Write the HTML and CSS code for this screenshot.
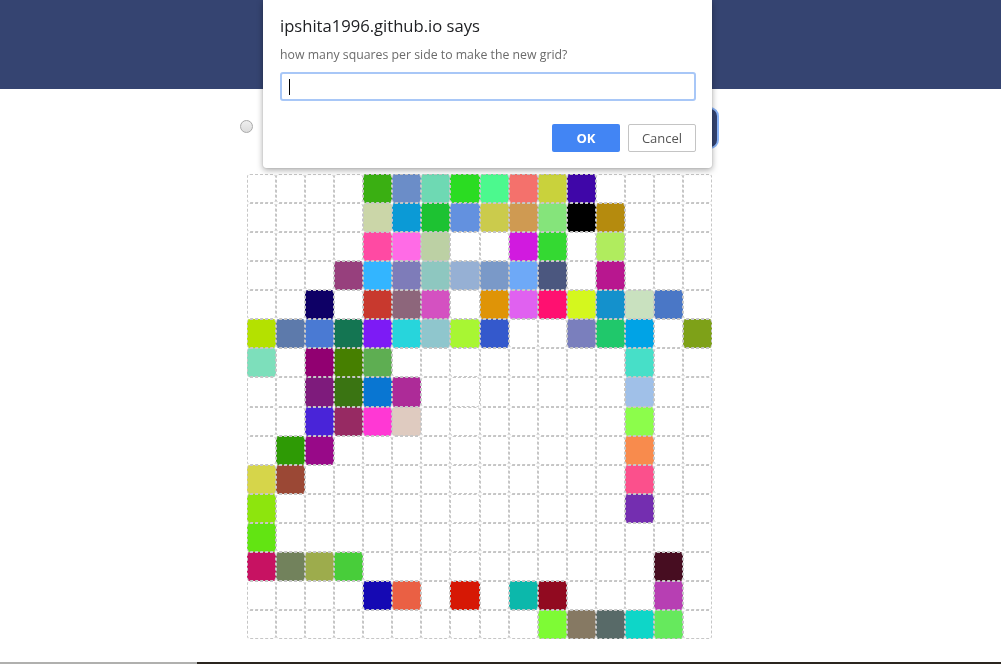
FILE: index.html
```html
<!DOCTYPE html>
<html>
<head>
<meta charset="utf-8">
<link rel="stylesheet" href="styles.css">
</head>
<body>
<header class="topbar"></header>
<main class="main">
  <div class="toolbar">
    <span class="radio"></span>
    <button class="btn" aria-label="Clear grid"></button>
  </div>
  <div class="grid">
<div class="c"></div><div class="c"></div><div class="c"></div><div class="c"></div><div class="c" style="background:#3aaf12"></div><div class="c" style="background:#6b8dc8"></div><div class="c" style="background:#6ed9b3"></div><div class="c" style="background:#2bdc22"></div><div class="c" style="background:#4cf98e"></div><div class="c" style="background:#f4716c"></div><div class="c" style="background:#c9d23c"></div><div class="c" style="background:#3f06a8"></div><div class="c"></div><div class="c"></div><div class="c"></div><div class="c"></div>
<div class="c"></div><div class="c"></div><div class="c"></div><div class="c"></div><div class="c" style="background:#cbd6a8"></div><div class="c" style="background:#0b9ad6"></div><div class="c" style="background:#1dc232"></div><div class="c" style="background:#6391df"></div><div class="c" style="background:#cbcb4c"></div><div class="c" style="background:#cf9a52"></div><div class="c" style="background:#85e47b"></div><div class="c" style="background:#000000"></div><div class="c" style="background:#b58b0e"></div><div class="c"></div><div class="c"></div><div class="c"></div>
<div class="c"></div><div class="c"></div><div class="c"></div><div class="c"></div><div class="c" style="background:#ff4aa3"></div><div class="c" style="background:#ff6be6"></div><div class="c" style="background:#bcd0a4"></div><div class="c"></div><div class="c"></div><div class="c" style="background:#d11adf"></div><div class="c" style="background:#34d932"></div><div class="c"></div><div class="c" style="background:#b0ec5e"></div><div class="c"></div><div class="c"></div><div class="c"></div>
<div class="c"></div><div class="c"></div><div class="c"></div><div class="c" style="background:#97407d"></div><div class="c" style="background:#33b5ff"></div><div class="c" style="background:#7e7cb9"></div><div class="c" style="background:#8ec7c0"></div><div class="c" style="background:#96b0d4"></div><div class="c" style="background:#7a99c8"></div><div class="c" style="background:#6ea9f7"></div><div class="c" style="background:#4b577f"></div><div class="c"></div><div class="c" style="background:#b8178f"></div><div class="c"></div><div class="c"></div><div class="c"></div>
<div class="c"></div><div class="c"></div><div class="c" style="background:#0e0066"></div><div class="c"></div><div class="c" style="background:#c8392e"></div><div class="c" style="background:#8d667b"></div><div class="c" style="background:#d451c1"></div><div class="c"></div><div class="c" style="background:#df9407"></div><div class="c" style="background:#e061f0"></div><div class="c" style="background:#ff1070"></div><div class="c" style="background:#d4f71e"></div><div class="c" style="background:#1491cc"></div><div class="c" style="background:#c9e1bf"></div><div class="c" style="background:#4a77c6"></div><div class="c"></div>
<div class="c" style="background:#b4e100"></div><div class="c" style="background:#5d7aab"></div><div class="c" style="background:#4a7ad3"></div><div class="c" style="background:#147552"></div><div class="c" style="background:#7d1bf5"></div><div class="c" style="background:#27d5dc"></div><div class="c" style="background:#8fc6cd"></div><div class="c" style="background:#a8f633"></div><div class="c" style="background:#3459cc"></div><div class="c"></div><div class="c"></div><div class="c" style="background:#7a7fbd"></div><div class="c" style="background:#20c86b"></div><div class="c" style="background:#00a3e6"></div><div class="c"></div><div class="c" style="background:#7ea118"></div>
<div class="c" style="background:#7ddfbb"></div><div class="c"></div><div class="c" style="background:#910071"></div><div class="c" style="background:#467f00"></div><div class="c" style="background:#5eae52"></div><div class="c"></div><div class="c"></div><div class="c"></div><div class="c"></div><div class="c"></div><div class="c"></div><div class="c"></div><div class="c"></div><div class="c" style="background:#47dfc8"></div><div class="c"></div><div class="c"></div>
<div class="c"></div><div class="c"></div><div class="c" style="background:#7e1b7c"></div><div class="c" style="background:#3a7412"></div><div class="c" style="background:#0976d2"></div><div class="c" style="background:#ad2b98"></div><div class="c"></div><div class="c"></div><div class="c"></div><div class="c"></div><div class="c"></div><div class="c"></div><div class="c"></div><div class="c" style="background:#a0c0e8"></div><div class="c"></div><div class="c"></div>
<div class="c"></div><div class="c"></div><div class="c" style="background:#4924d8"></div><div class="c" style="background:#972a63"></div><div class="c" style="background:#ff38d4"></div><div class="c" style="background:#dfcbc0"></div><div class="c"></div><div class="c"></div><div class="c"></div><div class="c"></div><div class="c"></div><div class="c"></div><div class="c"></div><div class="c" style="background:#8cfd4b"></div><div class="c"></div><div class="c"></div>
<div class="c"></div><div class="c" style="background:#2e9a05"></div><div class="c" style="background:#980988"></div><div class="c"></div><div class="c"></div><div class="c"></div><div class="c"></div><div class="c"></div><div class="c"></div><div class="c"></div><div class="c"></div><div class="c"></div><div class="c"></div><div class="c" style="background:#f88b4d"></div><div class="c"></div><div class="c"></div>
<div class="c" style="background:#d6d54a"></div><div class="c" style="background:#9b4835"></div><div class="c"></div><div class="c"></div><div class="c"></div><div class="c"></div><div class="c"></div><div class="c"></div><div class="c"></div><div class="c"></div><div class="c"></div><div class="c"></div><div class="c"></div><div class="c" style="background:#fb508c"></div><div class="c"></div><div class="c"></div>
<div class="c" style="background:#8de50d"></div><div class="c"></div><div class="c"></div><div class="c"></div><div class="c"></div><div class="c"></div><div class="c"></div><div class="c"></div><div class="c"></div><div class="c"></div><div class="c"></div><div class="c"></div><div class="c"></div><div class="c" style="background:#742eb0"></div><div class="c"></div><div class="c"></div>
<div class="c" style="background:#62e412"></div><div class="c"></div><div class="c"></div><div class="c"></div><div class="c"></div><div class="c"></div><div class="c"></div><div class="c"></div><div class="c"></div><div class="c"></div><div class="c"></div><div class="c"></div><div class="c"></div><div class="c"></div><div class="c"></div><div class="c"></div>
<div class="c" style="background:#c71262"></div><div class="c" style="background:#72825c"></div><div class="c" style="background:#9dac4c"></div><div class="c" style="background:#48cd3a"></div><div class="c"></div><div class="c"></div><div class="c"></div><div class="c"></div><div class="c"></div><div class="c"></div><div class="c"></div><div class="c"></div><div class="c"></div><div class="c"></div><div class="c" style="background:#470d21"></div><div class="c"></div>
<div class="c"></div><div class="c"></div><div class="c"></div><div class="c"></div><div class="c" style="background:#1509b3"></div><div class="c" style="background:#ea6044"></div><div class="c"></div><div class="c" style="background:#d61805"></div><div class="c"></div><div class="c" style="background:#0cb8ab"></div><div class="c" style="background:#910a20"></div><div class="c"></div><div class="c"></div><div class="c"></div><div class="c" style="background:#b73fb3"></div><div class="c"></div>
<div class="c"></div><div class="c"></div><div class="c"></div><div class="c"></div><div class="c"></div><div class="c"></div><div class="c"></div><div class="c"></div><div class="c"></div><div class="c"></div><div class="c" style="background:#7efb35"></div><div class="c" style="background:#867963"></div><div class="c" style="background:#586a68"></div><div class="c" style="background:#0ed6c8"></div><div class="c" style="background:#66e95d"></div><div class="c"></div>
  </div>
</main>

<div class="dialog">
  <div class="d-title">ipshita1996.github.io says</div>
  <div class="d-msg">how many squares per side to make the new grid?</div>
  <div class="d-input"><span class="caret"></span></div>
  <div class="d-actions">
    <button class="d-ok">OK</button>
    <button class="d-cancel">Cancel</button>
  </div>
</div>

<div class="taskbar"><span class="tb-left"></span><span class="tb-right"></span></div>
</body>
</html>
```

FILE: styles.css
```css
html, body {
  margin: 0;
  padding: 0;
  background: #fff;
  font-family: "Open Sans", "Noto Sans", sans-serif;
  overflow: hidden;
}

.topbar {
  height: 89px;
  background: #354471;
}

.main {
  width: 478px;
  margin-left: 240px;
  padding-top: 19px;
}

.toolbar {
  height: 40px;
  display: flex;
  align-items: center;
  justify-content: space-between;
}

.radio {
  width: 11px;
  height: 11px;
  border-radius: 50%;
  border: 1px solid #a9a9a9;
  background: linear-gradient(#eee, #dcdcdc);
  margin-top: -4px;
}

.btn {
  height: 40px;
  width: 120px;
  border: none;
  background: #354471;
  border-radius: 8px;
  outline: 2px solid #8ab4f8;
  outline-offset: -1px;
}

.grid {
  margin-top: 26px;
  margin-left: 7px;
  width: 465px;
  height: 465px;
  display: grid;
  grid-template-columns: repeat(16, 1fr);
  grid-template-rows: repeat(16, 1fr);
}

.c {
  border: 1px dashed #c6c6c6;
  border-radius: 3px;
}

.dialog {
  position: fixed;
  top: 0;
  left: 263px;
  width: 449px;
  height: 168px;
  box-sizing: border-box;
  padding: 15px 16px 0 17px;
  background: #fff;
  border-radius: 0 0 3px 3px;
  box-shadow: 0 2px 6px rgba(0, 0, 0, 0.35), 0 0 1px rgba(0, 0, 0, 0.3);
}

.d-title {
  font-size: 16.6px;
  color: #202124;
  line-height: 22px;
}

.d-msg {
  margin-top: 9px;
  font-size: 12.3px;
  color: #6b6b6b;
  line-height: 18px;
}

.d-input {
  margin-top: 8px;
  height: 29px;
  box-sizing: border-box;
  border: 2px solid #a8c7f7;
  border-radius: 3px;
  display: flex;
  align-items: center;
  padding-left: 7px;
}

.caret {
  width: 1px;
  height: 16px;
  background: #000;
}

.d-actions {
  margin-top: 23px;
  display: flex;
  justify-content: flex-end;
  gap: 8px;
}

.d-ok, .d-cancel {
  width: 68px;
  height: 28px;
  border-radius: 2px;
  font-family: inherit;
  font-size: 13px;
  padding: 0;
}

.d-ok {
  border: none;
  background: #4285f4;
  color: #fff;
  font-weight: 700;
}

.d-cancel {
  border: 1px solid #c4c4c4;
  background: #fff;
  color: #555;
}

.taskbar {
  position: fixed;
  left: 0;
  right: 0;
  bottom: 0;
  height: 2px;
  display: flex;
}

.tb-left {
  width: 197px;
  background: #b0b0ae;
}

.tb-right {
  flex: 1;
  background: #2a251f;
}
```
